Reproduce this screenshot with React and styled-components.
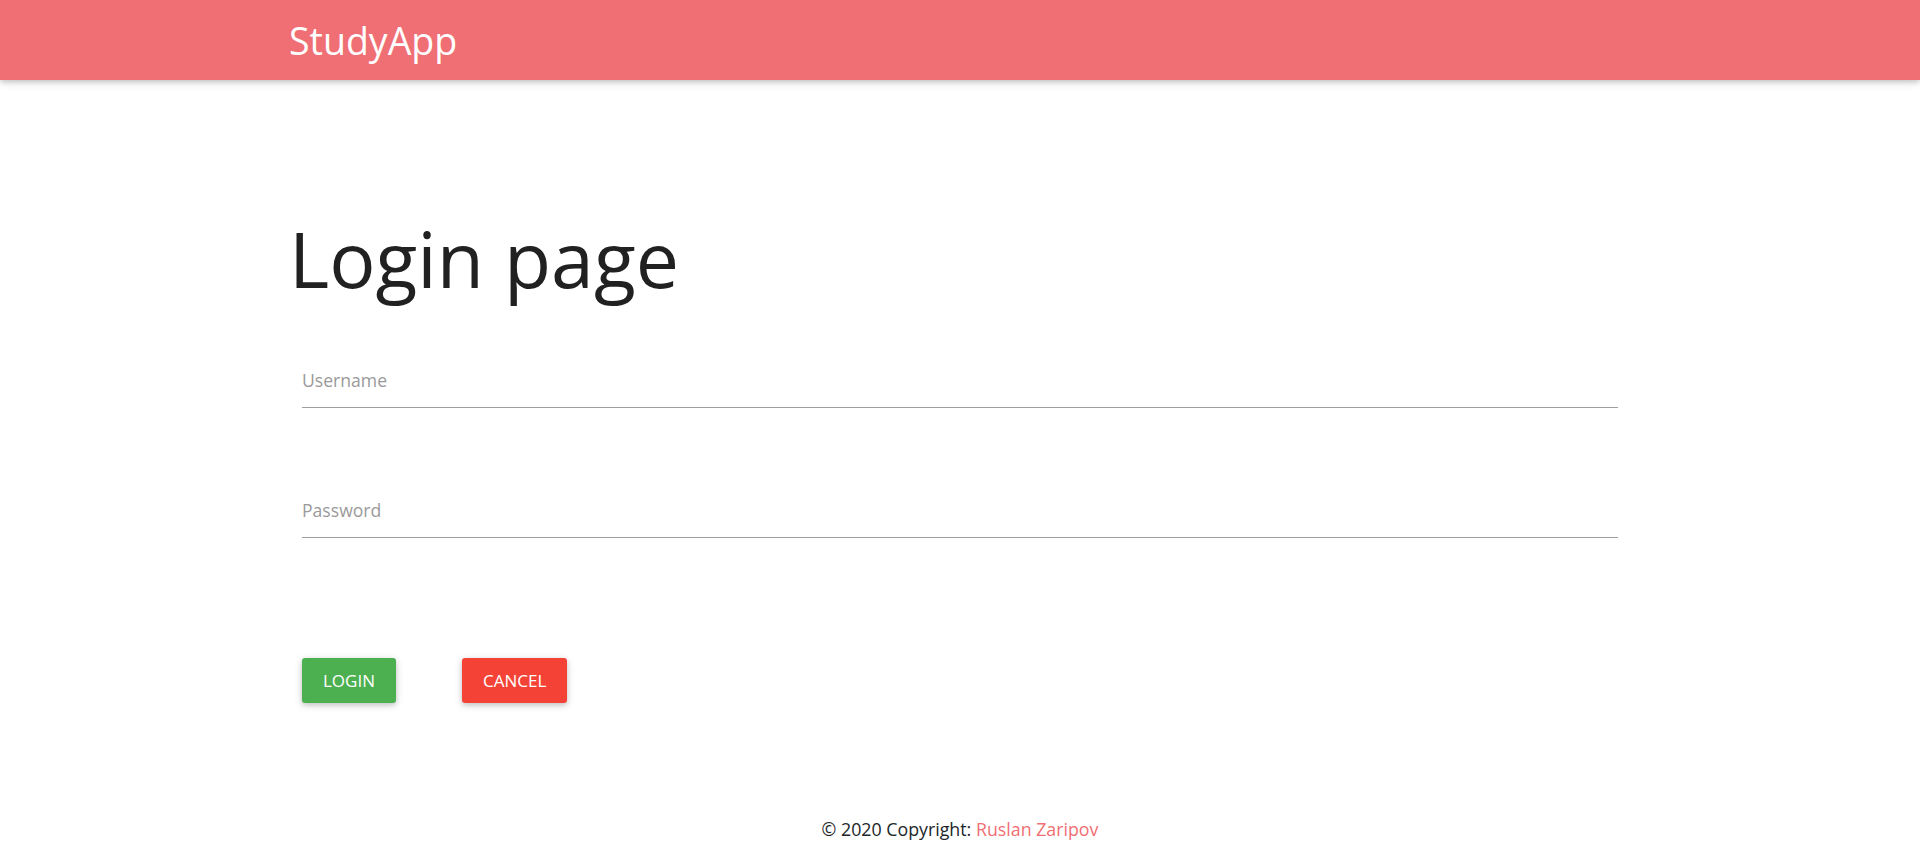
import React from "react";
import styled, { createGlobalStyle } from "styled-components";

const GlobalStyle = createGlobalStyle`
  body {
    margin: 0;
    background: #fff;
    font-family: "Open Sans", "Noto Sans", sans-serif;
    color: #212529;
  }
`;

const Navbar = styled.header`
  height: 80px;
  background: #f06f74;
  box-shadow: 0 2px 5px rgba(0, 0, 0, 0.16), 0 2px 10px rgba(0, 0, 0, 0.12);
  display: flex;
  align-items: center;
`;

const Container = styled.div`
  width: 1342px;
  margin: 0 auto;
`;

const Brand = styled.div`
  color: #fff;
  font-size: 37.5px;
  font-weight: 400;
  line-height: normal;
`;

const Main = styled.main`
  padding-top: 133px;
`;

const Title = styled.h1`
  margin: 0;
  font-size: 77px;
  line-height: 92px;
  font-weight: 400;
  color: #212121;
`;

const Form = styled.form`
  padding: 63px 13px 0;
  display: flex;
  flex-direction: column;
  gap: 90px;
`;

const Input = styled.input`
  box-sizing: border-box;
  width: 100%;
  height: 40px;
  padding: 0 0 15px;
  border: none;
  border-bottom: 1px solid #9e9e9e;
  outline: none;
  background: transparent;
  font-family: inherit;
  font-size: 17.6px;
  line-height: 24px;
  color: #212529;

  &::placeholder {
    color: #9a9a9a;
  }
`;

const Buttons = styled.div`
  display: flex;
  gap: 66px;
  margin-top: 30px;
`;

const Button = styled.button`
  height: 45px;
  padding: 0 21px;
  border: none;
  border-radius: 3px;
  background: ${(p) => p.color};
  color: #fff;
  font-family: inherit;
  font-size: 17px;
  text-transform: uppercase;
  box-shadow: 0 2px 5px rgba(0, 0, 0, 0.16), 0 2px 10px rgba(0, 0, 0, 0.12);
  cursor: pointer;
`;

const Footer = styled.footer`
  margin-top: 113px;
  text-align: center;
  font-size: 17.8px;
  line-height: 26.4px;
  color: #212529;
  padding-bottom: 20px;
`;

const FooterLink = styled.a`
  color: #f06f74;
  text-decoration: none;
`;

export default function App() {
  return (
    <>
      <GlobalStyle />
      <Navbar>
        <Container>
          <Brand>StudyApp</Brand>
        </Container>
      </Navbar>
      <Main>
        <Container>
          <Title>Login page</Title>
          <Form onSubmit={(e) => e.preventDefault()}>
            <Input type="text" placeholder="Username" />
            <Input type="password" placeholder="Password" />
            <Buttons>
              <Button type="submit" color="#4caf50">Login</Button>
              <Button type="button" color="#f44336">Cancel</Button>
            </Buttons>
          </Form>
        </Container>
      </Main>
      <Footer>
        © 2020 Copyright: <FooterLink href="#">Ruslan Zaripov</FooterLink>
      </Footer>
    </>
  );
}
